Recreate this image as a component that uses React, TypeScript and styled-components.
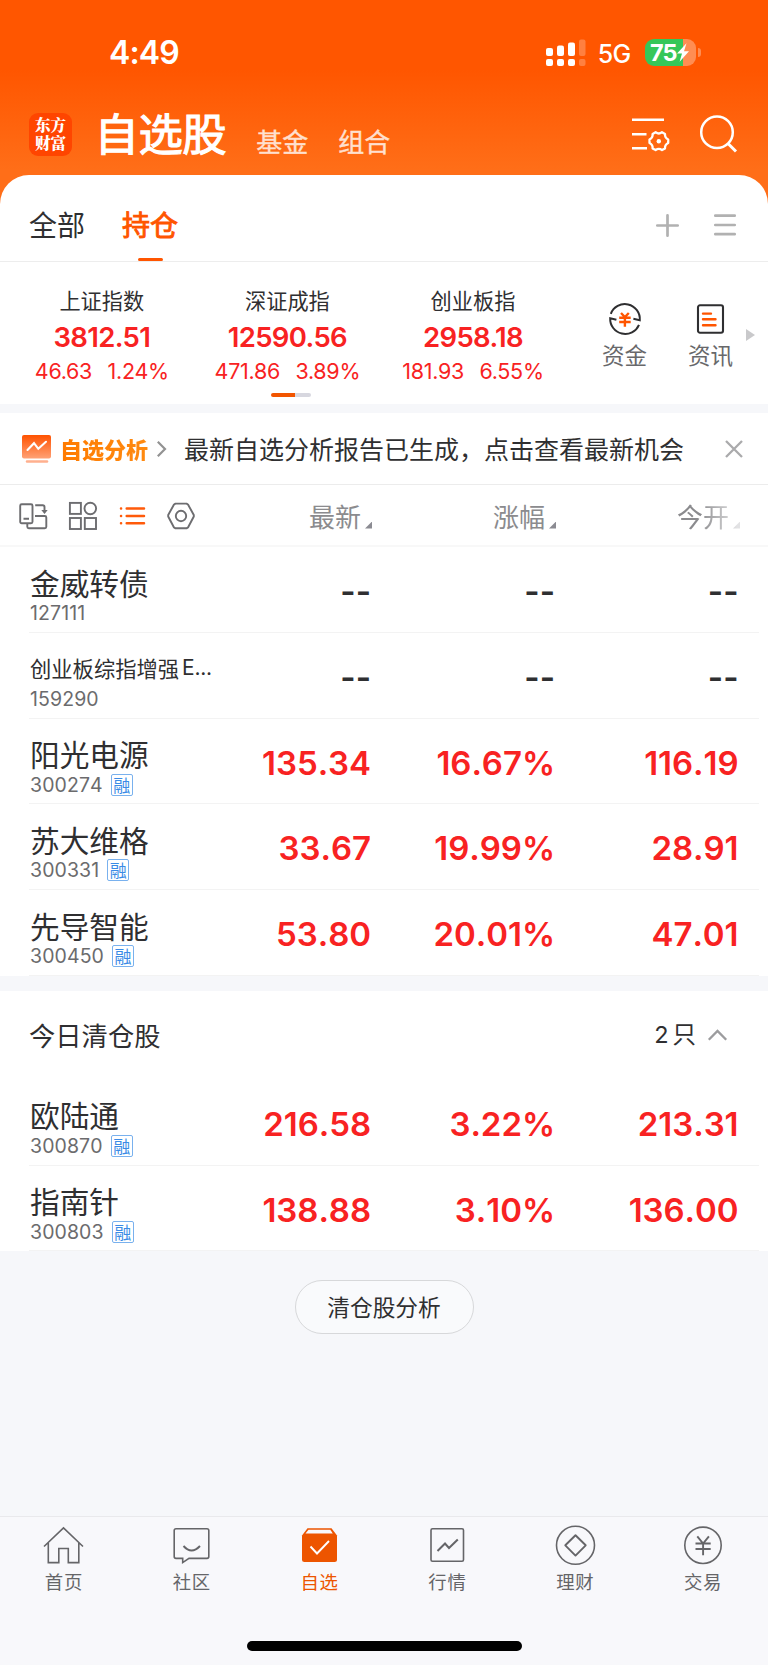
import React from 'react';
import styled, { createGlobalStyle } from 'styled-components';

const cjk = '"Noto Sans CJK SC", sans-serif';
const latin = 'Inter, "Noto Sans CJK SC", sans-serif';

const GlobalStyle = createGlobalStyle`
  * { box-sizing: border-box; }
  body { margin: 0; background: #f7f8fb; font-family: ${cjk}; color: #2f2f31; font-optical-sizing: none; }
  svg { display: block; flex: none; overflow: visible; }
`;

const Screen = styled.div`
  width: 768px;
  height: 1665px;
  display: flex;
  flex-direction: column;
  overflow: hidden;
  background: #f6f7fa;
`;

const Hero = styled.header`
  flex: none;
  height: 205px;
  background: linear-gradient(#ff5600 0, #ff5600 70px, #ff6e18 170px, #ff6e18 100%);
  color: #fff;
`;

const StatusBar = styled.div`
  height: 88px;
  padding: 17px 67px 0 109px;
  display: flex;
  align-items: center;
`;

const Clock = styled.span`
  font: 600 32px/36px ${latin};
  letter-spacing: -0.9px;
  margin: 1px auto 0 0;
`;

const Network = styled.span`
  font: 500 25px/30px ${latin};
  letter-spacing: -0.7px;
  margin: 3px 14.5px 0 12px;
`;

const Battery = styled.div`
  display: flex;
  align-items: center;
  gap: 2px;
`;

const BatteryBody = styled.div`
  width: 51px;
  height: 27px;
  padding-left: 5px;
  border-radius: 9px;
  display: flex;
  align-items: center;
  background: linear-gradient(90deg, #35c759 38px, #ff8d52 38px);
  font: 700 23.5px/27px ${latin};
  letter-spacing: -0.9px;
`;

const BatteryCap = styled.span`
  width: 3px;
  height: 9px;
  border-radius: 0 4px 4px 0;
  background: #ff8d52;
`;

const TitleBar = styled.div`
  height: 87px;
  padding: 0 31px 0 29px;
  display: flex;
  align-items: flex-start;
`;

const Logo = styled.div`
  width: 43px;
  height: 43px;
  margin-top: 25px;
  padding-top: 3px;
  border-radius: 9px;
  background: #ff4500;
  text-align: center;
  font: 900 15.6px/17.6px "Noto Serif CJK SC", ${cjk};
`;

const Title = styled.h1`
  margin: 22px 0 0 22.5px;
  font: 400 44.4px/44px ${cjk};
  letter-spacing: -0.5px;
  -webkit-text-stroke: 1.1px currentColor;
`;

const TitleTab = styled.span<{ $gap: number }>`
  margin: 39px 0 0 ${p => p.$gap}px;
  font: 400 26px/28px ${cjk};
  -webkit-text-stroke: 0.4px currentColor;
  color: #ffe0cf;
`;

const HeroActions = styled.div`
  margin: 27px 0 0 auto;
  display: flex;
  gap: 31px;
`;

const Sheet = styled.main`
  flex: none;
  margin-top: -30px;
  border-radius: 29px 29px 0 0;
  background: #fff;
`;

const Tabs = styled.nav`
  height: 87px;
  padding: 0 32px 0 29px;
  display: flex;
  align-items: center;
  border-bottom: 1px solid #ededed;
`;

const Tab = styled.div<{ $active?: boolean }>`
  height: 86px;
  margin-right: 37px;
  display: flex;
  flex-direction: column;
  align-items: center;
  padding-top: 34px;
  font: 400 28px/30px ${cjk};
  -webkit-text-stroke: ${p => (p.$active ? '0.9px' : '0')} currentColor;
  color: ${p => (p.$active ? '#ff5500' : '#2f2f31')};
  &::after {
    content: '';
    width: 25px;
    height: 4px;
    margin-top: 19px;
    border-radius: 2px;
    background: ${p => (p.$active ? '#ff5500' : 'transparent')};
  }
`;

const TabActions = styled.div`
  margin: 14px 0 0 auto;
  display: flex;
  align-items: center;
  gap: 35px;
`;

const Market = styled.section`
  height: 142px;
  display: flex;
`;

const IndexPager = styled.div`
  width: 566px;
  padding: 26px 0 0 9px;
`;

const IndexList = styled.div`
  display: grid;
  grid-template-columns: repeat(3, 185.6px);
  height: 105px;
`;

const IndexCard = styled.div`
  display: flex;
  flex-direction: column;
  align-items: center;
`;

const IndexName = styled.span`
  font: 400 21.2px/24px ${cjk};
`;

const IndexValue = styled.span`
  margin-top: 8px;
  font: 600 27.5px/34px ${latin};
  letter-spacing: -0.65px;
  color: #f82222;
`;

const IndexChange = styled.span`
  display: flex;
  gap: 15.5px;
  margin-top: 4px;
  font: 400 21.5px/26px ${latin};
  letter-spacing: -0.3px;
  color: #f82222;
`;

const PagerBar = styled.div`
  width: 40px;
  height: 4px;
  margin: 0 0 0 262px;
  border-radius: 2px;
  background: linear-gradient(90deg, #f25500 24px, #d7d7df 24px);
`;

const Shortcuts = styled.div`
  flex: 1;
  display: flex;
  padding: 41px 0 0 36px;
`;

const Shortcut = styled.div`
  width: 45px;
  margin-right: 41px;
  display: flex;
  flex-direction: column;
  align-items: center;
  gap: 6px;
  white-space: nowrap;
  font: 400 22.5px/26px ${cjk};
  color: #68686a;
`;

const More = styled.div`
  margin: 26px 0 0 -28px;
`;

const Band = styled.div<{ $h: number }>`
  height: ${p => p.$h}px;
  background: #f6f7fa;
`;

const Notice = styled.section`
  height: 72px;
  padding: 0 25px 0 21.5px;
  display: flex;
  align-items: center;
  border-bottom: 1px solid #ececec;
`;

const NoticeTag = styled.span`
  margin: -2px 9px 0 9.5px;
  font: 900 22px/26px ${cjk};
  background: linear-gradient(90deg, #ff7b00, #ff8a10);
  background-clip: text;
  color: transparent;
`;

const NoticeText = styled.span`
  margin: -1px auto 0 18px;
  font: 400 25px/30px ${cjk};
  white-space: nowrap;
`;

const columns = 'grid-template-columns: 210px 132px 184px 183.5px;';

const TableHead = styled.div`
  height: 62px;
  padding: 1px 0 0 19px;
  display: flex;
  align-items: center;
  border-bottom: 2px solid #f8f8f8;
`;

const ViewModes = styled.div`
  width: 290px;
  display: flex;
  align-items: center;
  gap: 21.3px;
`;

const ColumnTitle = styled.div<{ $fade?: boolean }>`
  width: 184px;
  display: flex;
  align-items: flex-end;
  gap: 4px;
  font: 400 26px/32px ${cjk};
  color: #8b8b8e;
  ${p => p.$fade && 'width: 75px; mask-image: linear-gradient(90deg, #000 30%, rgba(0,0,0,.25) 80%);'}
`;

const Corner = styled.i`
  width: 7px;
  height: 7px;
  margin-bottom: 3px;
  background: #8b8b92;
  clip-path: polygon(100% 0, 100% 100%, 0 100%);
`;

const Row = styled.div`
  height: 85.75px;
  margin: 0 9px 0 29px;
  display: grid;
  ${columns}
  border-bottom: 1px solid #f3f3f3;
`;

const NameCell = styled.div`
  padding: 18px 0 0 1px;
`;

const Name = styled.div<{ $small?: boolean }>`
  height: 37px;
  display: flex;
  align-items: center;
  gap: 3px;
  padding-bottom: 2px;
  white-space: nowrap;
  font: 400 ${p => (p.$small ? '21.3px' : '29.7px')}/34px ${cjk};
`;

const NameTail = styled.span`
  font: 400 21px/30px ${latin};
  letter-spacing: -0.3px;
`;

const Code = styled.div`
  display: flex;
  align-items: center;
  gap: 8px;
  height: 22px;
  font: 400 19.5px/22px ${latin};
  font-kerning: none;
  letter-spacing: 0.1px;
  color: #6b6b6d;
`;

const MarginTag = styled.span`
  width: 22px;
  height: 22px;
  border: 1px solid #79b1ee;
  border-radius: 2px;
  text-align: center;
  font: 400 17px/19px ${cjk};
  letter-spacing: 0;
  color: #3a8be6;
`;

const Quote = styled.div<{ $empty?: boolean }>`
  padding-top: 24px;
  text-align: right;
  font: 600 33px/40px ${latin};
  font-kerning: none;
  letter-spacing: -0.05px;
  color: ${p => (p.$empty ? '#2f2f31' : '#f82222')};
`;

const Dashes = styled.span`
  display: inline-flex;
  letter-spacing: 0;
`;

const SectionHead = styled.div`
  height: 89px;
  padding: 0 41px 0 29px;
  display: flex;
  align-items: center;
  font: 400 26.3px/32px ${cjk};
`;

const Count = styled.span`
  margin: 0 12px 0 auto;
  display: flex;
  gap: 4px;
  font: 400 23.5px/32px ${latin};
`;

const Footer = styled.div`
  flex: 1;
  padding-top: 29px;
  text-align: center;
`;

const Pill = styled.button`
  width: 179px;
  height: 54px;
  padding: 0;
  border: 1.5px solid #d7d8da;
  border-radius: 27px;
  background: #f9fafc;
  color: #2f2f31;
  font: 400 22.7px/30px ${cjk};
`;

const TabBar = styled.nav`
  flex: none;
  height: 149px;
  border-top: 1px solid #e9e9ec;
  background: #f8f8fb;
  display: flex;
  flex-direction: column;
  align-items: center;
  justify-content: space-between;
`;

const TabItems = styled.div`
  width: 100%;
  padding-right: 1px;
  display: grid;
  grid-template-columns: repeat(6, 1fr);
`;

const TabItem = styled.div<{ $active?: boolean }>`
  display: flex;
  flex-direction: column;
  align-items: center;
  padding-top: 9px;
  color: ${p => (p.$active ? '#ed5500' : '#656568')};
`;

const TabLabel = styled.span`
  margin-top: 4px;
  font: 400 18.4px/24px ${cjk};
  letter-spacing: 0.7px;
`;

const HomeIndicator = styled.div`
  width: 275px;
  height: 10px;
  margin-bottom: 14px;
  border-radius: 5px;
  background: #000;
`;

const line = { fill: 'none', stroke: 'currentColor', strokeWidth: 1.6 } as const;

const Signal = () => (
  <svg width="40" height="28" viewBox="0 0 40 28" fill="#fff">
    {[[0, 9, 8], [11, 6.5, 10.5], [22, 3.5, 13.5]].map(([x, y, h]) => (
      <g key={x}>
        <rect x={x} y={y} width="7" height={h} rx="2" />
        <rect x={x} y="20" width="7" height="7" rx="2" />
      </g>
    ))}
    <g opacity=".25">
      <rect x="33" y="0.5" width="6.5" height="16.5" rx="2" />
      <rect x="33" y="20" width="6.5" height="7" rx="2" />
    </g>
  </svg>
);

const Bolt = () => (
  <svg width="12" height="19" viewBox="0 0 12 19" fill="#fff">
    <path d="M9.5.2 0 10.5h5L2.6 18.8 12 8.3H7z" />
  </svg>
);

const FilterSettings = () => (
  <svg width="37" height="36" viewBox="0 0 37 36" fill="none" stroke="#fff" strokeWidth="2.5">
    <path d="M0 4.8h32M0 19.2h14.5M0 33.2h15" />
    <path
      d="M23.6 17.2Q26.8 19.7 30 17.2L33 18.9Q32.7 22.8 36.2 24.5V28Q32.7 29.7 33 33.4L30 35.1Q26.8 32.7 23.6 35.1L20.6 33.4Q21 29.7 17.5 28V24.5Q21 22.8 20.6 18.9Z"
      strokeWidth="2.3"
      strokeLinejoin="round"
    />
    <circle cx="26.8" cy="26.2" r="2.2" fill="#fff" stroke="none" />
  </svg>
);

const SearchIcon = () => (
  <svg width="37" height="38" viewBox="0 0 37 38" fill="none" stroke="#fff" strokeWidth="2.5">
    <circle cx="17" cy="17.3" r="15.8" />
    <path d="M28 28.5l8 8" strokeWidth="3" />
  </svg>
);

const Plus = () => (
  <svg width="23" height="23" viewBox="0 0 23 23" fill="none" stroke="#b1b1b1" strokeWidth="2.7" strokeLinecap="round">
    <path d="M11.5 1.3v20.4M1.3 11.5h20.4" />
  </svg>
);

const Menu = () => (
  <svg width="22" height="22" viewBox="0 0 22 22" fill="none" stroke="#b1b1b1" strokeWidth="2.7" strokeLinecap="round">
    <path d="M1.3 1.7h19.4M1.3 11h19.4M1.3 20.2h19.4" />
  </svg>
);

const Funds = () => (
  <svg width="32" height="32" viewBox="0 0 32 32" fill="none" stroke="#2f2f31" strokeWidth="2">
    <path d="M1.8 10.8A15 15 0 0 1 30.8 17.2L24.4 15.8M30 21.8A15 15 0 0 1 1.2 15.2L7.4 16.8" />
    <path d="M12 10l3.9 4 3.9-4M10.2 14.8h11.5M10.2 19h11.5M15.9 14v9.8" stroke="#ff5500" strokeWidth="2.4" />
  </svg>
);

const News = () => (
  <svg width="27" height="32" viewBox="0 0 27 32" fill="none" stroke="#2f2f31" strokeWidth="2.1">
    <rect x="1" y="2.3" width="25" height="27.4" rx="2" />
    <path d="M6 10.6h8M6 16.2h12.5M6 22.2h12.5" stroke="#ff5500" strokeWidth="2.4" strokeLinecap="round" />
  </svg>
);

const AnalysisIcon = () => (
  <svg width="29" height="28" viewBox="0 0 29 28">
    <defs>
      <linearGradient id="analysis" x2="0" y2="1">
        <stop stopColor="#ff5200" />
        <stop offset="1" stopColor="#ffa176" />
      </linearGradient>
    </defs>
    <rect width="29" height="23.5" rx="2" fill="url(#analysis)" />
    <path d="M5.5 15l6.5-6.8 4.3 5.6 7.7-7" fill="none" stroke="#fff" strokeWidth="2.1" strokeLinecap="round" />
    <path d="M5 26.5h20" stroke="#ffb08e" strokeWidth="2.5" strokeLinecap="round" />
  </svg>
);

const ChevronRight = () => (
  <svg width="9" height="16" viewBox="0 0 9 16" fill="none" stroke="#929292" strokeWidth="2.2">
    <path d="M.8.8L8 8 .8 15.2" />
  </svg>
);

const Close = () => (
  <svg width="18" height="18" viewBox="0 0 18 18" fill="none" stroke="#aaaaac" strokeWidth="2.3">
    <path d="M1 1l16 16M17 1L1 17" />
  </svg>
);

const grey = { fill: 'none', stroke: '#6d6d70', strokeWidth: 1.9 } as const;

const SplitView = () => (
  <svg width="29" height="28" viewBox="0 0 29 28" {...grey}>
    <rect x="1.2" y="2.3" width="12.3" height="19" rx="1.5" />
    <path d="M4.5 16.8h5.5M16.2 3.3h7.5q1.8 0 1.8 1.8v5M16 14h9.8q1.5 0 1.5 1.5v9.3q0 1.5-1.5 1.5H9.8q-1.5 0-1.5-1.5v-3.5" />
    <path d="M22.3 8h6.4L25.5 12z" fill="#6d6d70" stroke="none" />
  </svg>
);

const GridView = () => (
  <svg width="28" height="28" viewBox="0 0 28 28" {...grey}>
    <rect x=".9" y=".9" width="11" height="11" />
    <circle cx="21.3" cy="6.5" r="5.8" />
    <rect x=".9" y="16" width="11" height="11" />
    <rect x="15.8" y="16" width="11.2" height="11" />
  </svg>
);

const ListView = () => (
  <svg width="27" height="20" viewBox="0 0 27 20" stroke="#ff5a0a" strokeWidth="2.5" strokeLinecap="round">
    <path d="M7.7 2.5h17.3M7.7 10h17.3M7.7 17.3h17.3" />
    <path d="M2 2.5h.1M2 10h.1M2 17.3h.1" />
  </svg>
);

const HexView = () => (
  <svg width="28" height="28" viewBox="0 0 28 28" {...grey} strokeLinejoin="round">
    <path d="M8.5 1.6h11L21 2.5 26.8 13 26.8 14.5 21 25.5 19.5 26.3h-11L7 25.5 1.2 14.5V13L7 2.5z" />
    <circle cx="14" cy="14" r="5.2" />
  </svg>
);

const ChevronUp = () => (
  <svg width="19" height="12" viewBox="0 0 19 12" fill="none" stroke="#9c9c9e" strokeWidth="2.3">
    <path d="M.8 10.8L9.5 2l8.7 8.8" />
  </svg>
);

const navIcons: Record<string, React.ReactNode> = {
  首页: (
    <path d="M1 20.5L20.5 1.8 40 20.5M5.3 17v19.6h10.5V22.5h9.5v14.1h10.5V17" />
  ),
  社区: (
    <>
      <path d="M5 2.8h31q1.8 0 1.8 1.8v26q0 1.8-1.8 1.8H18l-6.3 4.2v-4.2H5q-1.8 0-1.8-1.8v-26Q3.2 2.8 5 2.8z" />
      <path d="M12.5 20q8 9 16.5 0" strokeWidth="1.9" />
    </>
  ),
  自选: (
    <>
      <path d="M3 9.5L8.5 2.3H32.5L38 9.5V33.5Q38 36 35.5 36H5.5Q3 36 3 33.5Z" fill="currentColor" stroke="none" />
      <path d="M9.5 3.8h21.8l2.5 3.8H6.5z" fill="#f8f8fb" stroke="none" />
      <path d="M11.5 20.5l6.5 7L30 15" stroke="#fff" strokeWidth="1.9" />
    </>
  ),
  行情: (
    <>
      <rect x="4" y="2.8" width="32.5" height="32.5" rx="1.5" />
      <path d="M10.5 25l7.5-7.5 4 4.5 8.8-8.5" strokeWidth="2" />
    </>
  ),
  理财: (
    <>
      <circle cx="20.5" cy="19.3" r="19" />
      <path d="M20.5 9.2L30.7 19.3 20.5 29.6 10.3 19.3z" strokeWidth="1.9" strokeLinejoin="round" />
    </>
  ),
  交易: (
    <>
      <circle cx="20" cy="19.3" r="18.2" />
      <path d="M14.3 10.3l5.8 7.2 5.8-7.2M12.5 17.5h15.2M12.5 23h15.2M20.1 17.5v11.7" strokeWidth="1.9" />
    </>
  ),
};

type Stock = { name: string; tail?: string; code: string; quotes?: string[] };

const holdings: Stock[] = [
  { name: '金威转债', code: '127111' },
  { name: '创业板综指增强', tail: 'E...', code: '159290' },
  { name: '阳光电源', code: '300274', quotes: ['135.34', '16.67%', '116.19'] },
  { name: '苏大维格', code: '300331', quotes: ['33.67', '19.99%', '28.91'] },
  { name: '先导智能', code: '300450', quotes: ['53.80', '20.01%', '47.01'] },
];

const cleared: Stock[] = [
  { name: '欧陆通', code: '300870', quotes: ['216.58', '3.22%', '213.31'] },
  { name: '指南针', code: '300803', quotes: ['138.88', '3.10%', '136.00'] },
];

const indices = [
  ['上证指数', '3812.51', '46.63', '1.24%'],
  ['深证成指', '12590.56', '471.86', '3.89%'],
  ['创业板指', '2958.18', '181.93', '6.55%'],
];

const StockRow = ({ name, tail, code, quotes }: Stock) => (
  <Row>
    <NameCell>
      <Name $small={!!tail}>
        {name}
        {tail && <NameTail>{tail}</NameTail>}
      </Name>
      <Code>
        {code}
        {quotes && <MarginTag>融</MarginTag>}
      </Code>
    </NameCell>
    {(quotes ?? ['', '', '']).map((q, i) => (
      <Quote key={i} $empty={!q}>
        {q || <Dashes><span>-</span><span>-</span></Dashes>}
      </Quote>
    ))}
  </Row>
);

export default function App() {
  return (
    <Screen>
      <GlobalStyle />
      <Hero>
        <StatusBar>
          <Clock>4:49</Clock>
          <Signal />
          <Network>5G</Network>
          <Battery>
            <BatteryBody>75<Bolt /></BatteryBody>
            <BatteryCap />
          </Battery>
        </StatusBar>
        <TitleBar>
          <Logo>东方<br />财富</Logo>
          <Title>自选股</Title>
          <TitleTab $gap={30}>基金</TitleTab>
          <TitleTab $gap={30}>组合</TitleTab>
          <HeroActions>
            <FilterSettings />
            <SearchIcon />
          </HeroActions>
        </TitleBar>
      </Hero>
      <Sheet>
        <Tabs>
          <Tab>全部</Tab>
          <Tab $active>持仓</Tab>
          <TabActions><Plus /><Menu /></TabActions>
        </Tabs>
        <Market>
          <IndexPager>
            <IndexList>
              {indices.map(([name, value, diff, pct]) => (
                <IndexCard key={name}>
                  <IndexName>{name}</IndexName>
                  <IndexValue>{value}</IndexValue>
                  <IndexChange><span>{diff}</span><span>{pct}</span></IndexChange>
                </IndexCard>
              ))}
            </IndexList>
            <PagerBar />
          </IndexPager>
          <Shortcuts>
            <Shortcut><Funds />资金</Shortcut>
            <Shortcut><News />资讯</Shortcut>
            <More>
              <svg width="9" height="12" viewBox="0 0 9 12" fill="#c9c9cb"><path d="M0 0l9 6-9 6z" /></svg>
            </More>
          </Shortcuts>
        </Market>
        <Band $h={9} />
        <Notice>
          <AnalysisIcon />
          <NoticeTag>自选分析</NoticeTag>
          <ChevronRight />
          <NoticeText>最新自选分析报告已生成，点击查看最新机会</NoticeText>
          <Close />
        </Notice>
        <TableHead>
          <ViewModes><SplitView /><GridView /><ListView /><HexView /></ViewModes>
          <ColumnTitle>最新<Corner /></ColumnTitle>
          <ColumnTitle>涨幅<Corner /></ColumnTitle>
          <ColumnTitle $fade>今开<Corner /></ColumnTitle>
        </TableHead>
        {holdings.map(s => <StockRow key={s.code} {...s} />)}
        <Band $h={15} />
        <SectionHead>
          今日清仓股
          <Count><span>2</span><span>只</span></Count>
          <ChevronUp />
        </SectionHead>
        {cleared.map(s => <StockRow key={s.code} {...s} />)}
      </Sheet>
      <Footer><Pill>清仓股分析</Pill></Footer>
      <TabBar>
        <TabItems>
          {Object.entries(navIcons).map(([label, icon]) => (
            <TabItem key={label} $active={label === '自选'}>
              <svg width="41" height="39" viewBox="0 0 41 39" {...line}>{icon}</svg>
              <TabLabel>{label}</TabLabel>
            </TabItem>
          ))}
        </TabItems>
        <HomeIndicator />
      </TabBar>
    </Screen>
  );
}
